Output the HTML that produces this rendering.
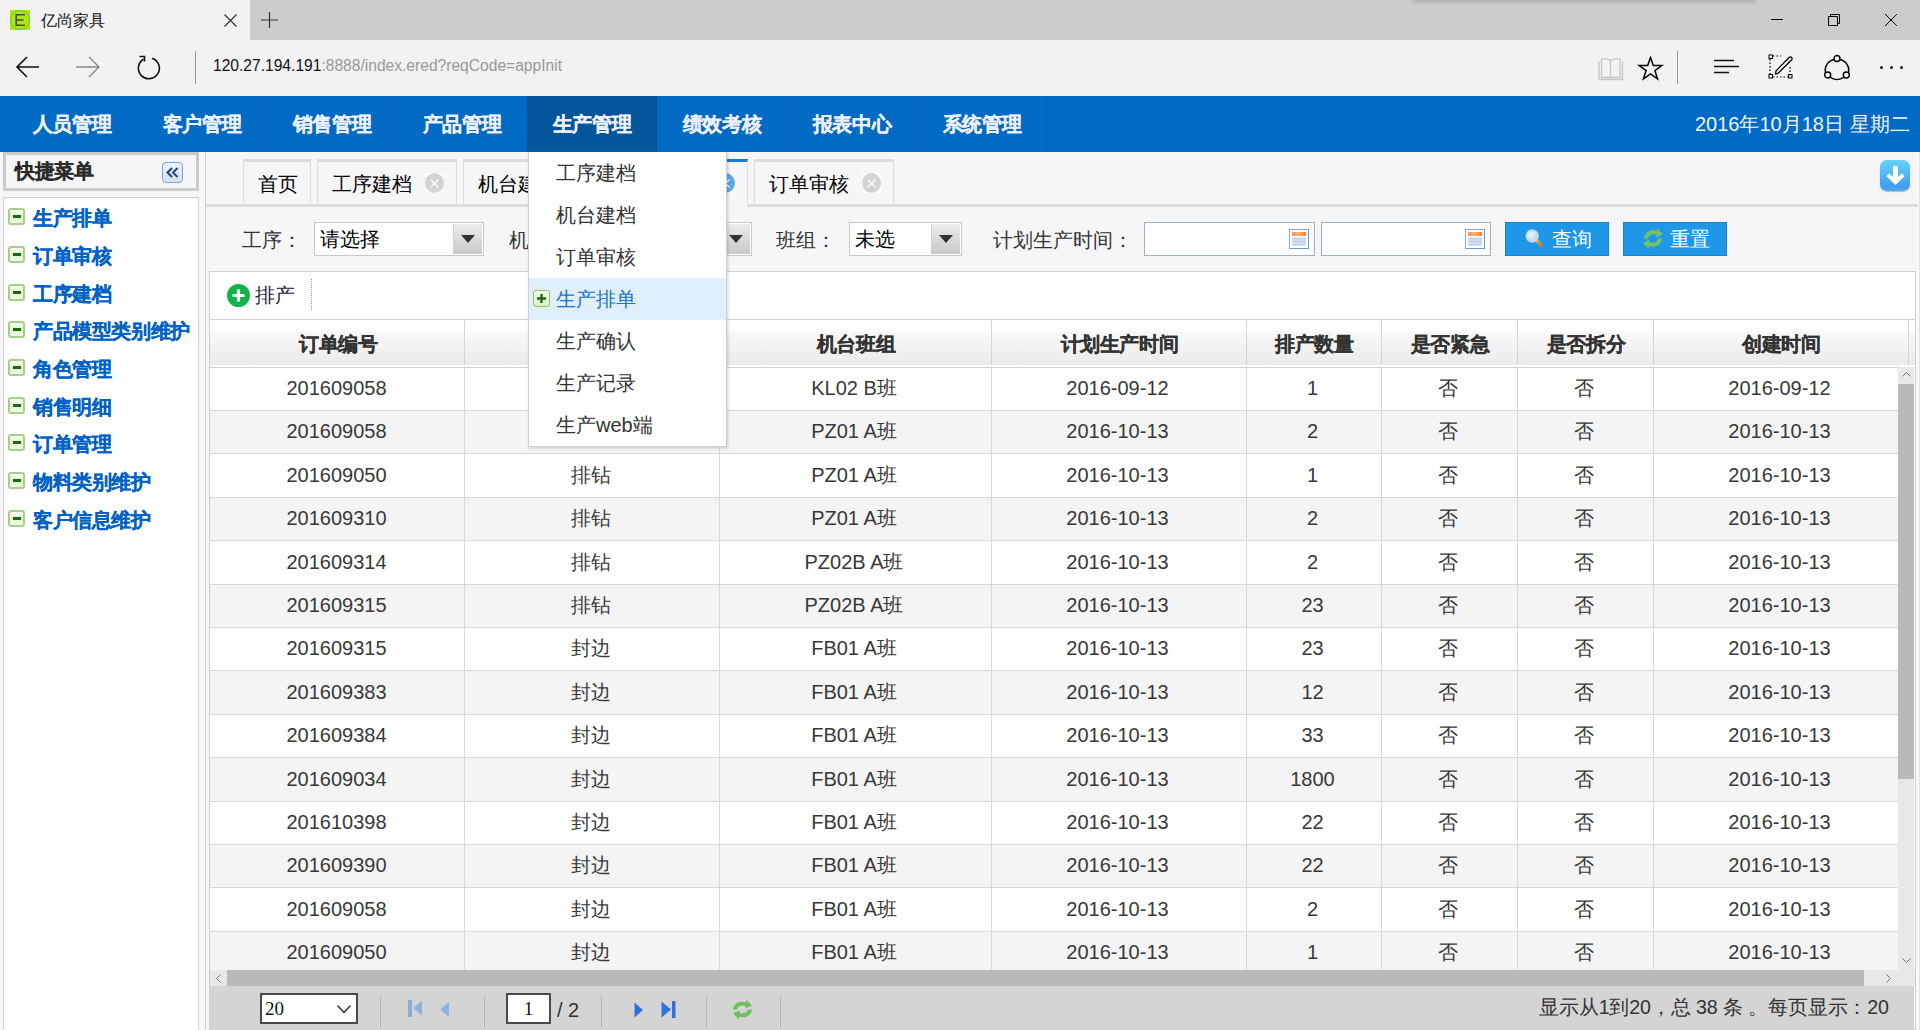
<!DOCTYPE html><html><head><meta charset="utf-8"><style>
*{box-sizing:border-box}
html,body{margin:0;padding:0}
body{width:1920px;height:1030px;overflow:hidden;position:relative;font-family:"Liberation Sans",sans-serif;background:#f6f6f9;color:#333}
.ab{position:absolute}
.t{position:absolute;white-space:nowrap;line-height:1}
.b{font-weight:bold;-webkit-text-stroke:0.2px currentColor;letter-spacing:-0.4px}
svg{position:absolute;overflow:visible}
</style></head><body>

<div class="ab" style="left:0;top:0;width:1920px;height:40px;background:#cccccc"></div>
<div class="ab" style="left:1413px;top:-6px;width:343px;height:8px;background:#a9a9a9;filter:blur(2px);border-radius:3px"></div>
<div class="ab" style="left:0;top:0;width:250px;height:40px;background:#f2f2f2"></div>
<div class="ab" style="left:10px;top:10px;width:20px;height:20px;background:#ade614"></div>
<div class="ab" style="left:10px;top:10px;width:20px;height:20px;border:1px solid #5fcf3a;border-radius:50%"></div>
<svg style="left:15px;top:14px" width="11" height="12"><path d="M10 0.8H1.2V11.2H10M1.2 6H8.5" fill="none" stroke="#4a4a44" stroke-width="1.5"/></svg>
<div class="t" style="left:41px;top:13px;font-size:16px;color:#111">亿尚家具</div>
<svg style="left:224px;top:14px" width="13" height="13"><path d="M0.5 0.5L12.5 12.5M12.5 0.5L0.5 12.5" stroke="#333" stroke-width="1.2"/></svg>
<svg style="left:261px;top:12px" width="17" height="16"><path d="M0 8H17M8.5 0V16" stroke="#333" stroke-width="1.2"/></svg>
<svg style="left:1771px;top:19px" width="12" height="1"><path d="M0 0.5H12" stroke="#000" stroke-width="1"/></svg>
<svg style="left:1828px;top:14px" width="12" height="12"><path d="M0.5 2.5H9.5V11.5H0.5Z M2.5 2.5V0.5H11.5V9.5H9.5" fill="none" stroke="#000" stroke-width="1"/></svg>
<svg style="left:1885px;top:14px" width="12" height="12"><path d="M0 0L12 12M12 0L0 12" stroke="#000" stroke-width="1"/></svg>
<div class="ab" style="left:0;top:40px;width:1920px;height:56px;background:#f2f2f2"></div>
<svg style="left:16px;top:56px" width="24" height="22"><path d="M23 11H1.5M11 1L1 11L11 21" fill="none" stroke="#111" stroke-width="1.6"/></svg>
<svg style="left:76px;top:56px" width="24" height="22"><path d="M0 11H22.5M13 1L23 11L13 21" fill="none" stroke="#888" stroke-width="1.4"/></svg>
<svg style="left:135.5px;top:55px" width="24" height="24"><path d="M7.5 4.2A10.5 10.5 0 1 0 16 3.2" fill="none" stroke="#111" stroke-width="1.6"/><path d="M3.5 1.5H8.5V6.5" fill="none" stroke="#111" stroke-width="1.6"/></svg>
<div class="ab" style="left:195px;top:51px;width:1px;height:33px;background:#999"></div>
<div class="t" style="left:213px;top:58px;font-size:15.6px;color:#111">120.27.194.191<span style="color:#999">:8888/index.ered?reqCode=appInit</span></div>
<svg style="left:1598px;top:58px" width="26" height="23"><path d="M1 3.5V21.5H12.5M24.5 3.5V21.5H12.5M3.5 1V19.5H12.5V2.5Q8 0 3.5 1ZM22 1V19.5H12.5V2.5Q17 0 22 1Z" fill="none" stroke="#c4c4c4" stroke-width="1.3"/></svg>
<svg style="left:1638px;top:56px" width="25" height="25"><path d="M12.5 1.5L15.3 9.6H23.8L16.9 14.6L19.5 22.8L12.5 17.8L5.5 22.8L8.1 14.6L1.2 9.6H9.7Z" fill="none" stroke="#000" stroke-width="1.5"/></svg>
<div class="ab" style="left:1677px;top:51px;width:1px;height:33px;background:#999"></div>
<svg style="left:1714px;top:59px" width="26" height="15"><path d="M0 1.5H20M0 7.5H25M0 13.5H15" stroke="#111" stroke-width="1.4"/></svg>
<svg style="left:1769px;top:55px" width="25" height="24"><path d="M1 4V21M21 12V21M4 1H12M4 22H19" fill="none" stroke="#000" stroke-width="1.2" stroke-dasharray="1.5 2"/><rect x="0" y="0" width="3.5" height="3.5" fill="none" stroke="#000" stroke-width="1"/><rect x="0" y="19.5" width="3.5" height="3.5" fill="none" stroke="#000" stroke-width="1"/><rect x="19.5" y="19.5" width="3.5" height="3.5" fill="none" stroke="#000" stroke-width="1"/><path d="M7 16L20 2.5Q22 1 23 3Q23.5 4.5 22 5.5L9 18.5L6.5 19Z" fill="none" stroke="#000" stroke-width="1.3"/></svg>
<svg style="left:1824px;top:55px" width="26" height="25"><circle cx="13" cy="3.5" r="3" fill="#f2f2f2" stroke="#000" stroke-width="1.4"/><circle cx="3.7" cy="20" r="3" fill="#f2f2f2" stroke="#000" stroke-width="1.4"/><circle cx="22.3" cy="20" r="3" fill="#f2f2f2" stroke="#000" stroke-width="1.4"/><path d="M10.3 4.5A11 11 0 0 0 1.4 17.5M15.7 4.5A11 11 0 0 1 24.6 17.5M6.3 22.3A11 11 0 0 0 19.7 22.3" fill="none" stroke="#000" stroke-width="1.4"/></svg>
<div class="ab" style="left:1880px;top:66px;width:3px;height:3px;border-radius:50%;background:#111"></div>
<div class="ab" style="left:1890px;top:66px;width:3px;height:3px;border-radius:50%;background:#111"></div>
<div class="ab" style="left:1900px;top:66px;width:3px;height:3px;border-radius:50%;background:#111"></div>
<div class="ab" style="left:0;top:96px;width:1920px;height:56px;background:#006ac4"></div>
<div class="t b" style="left:7px;top:114px;width:130px;text-align:center;font-size:20px;color:#eef1fb">人员管理</div>
<div class="ab" style="left:136px;top:96px;width:1px;height:56px;background:#0460b4"></div>
<div class="t b" style="left:137px;top:114px;width:130px;text-align:center;font-size:20px;color:#eef1fb">客户管理</div>
<div class="ab" style="left:266px;top:96px;width:1px;height:56px;background:#0460b4"></div>
<div class="t b" style="left:267px;top:114px;width:130px;text-align:center;font-size:20px;color:#eef1fb">销售管理</div>
<div class="ab" style="left:396px;top:96px;width:1px;height:56px;background:#0460b4"></div>
<div class="t b" style="left:397px;top:114px;width:130px;text-align:center;font-size:20px;color:#eef1fb">产品管理</div>
<div class="ab" style="left:526px;top:96px;width:1px;height:56px;background:#0460b4"></div>
<div class="t b" style="left:527px;top:114px;width:130px;text-align:center;font-size:20px;color:#eef1fb">生产管理</div>
<div class="ab" style="left:656px;top:96px;width:1px;height:56px;background:#0460b4"></div>
<div class="t b" style="left:657px;top:114px;width:130px;text-align:center;font-size:20px;color:#eef1fb">绩效考核</div>
<div class="ab" style="left:786px;top:96px;width:1px;height:56px;background:#0460b4"></div>
<div class="t b" style="left:787px;top:114px;width:130px;text-align:center;font-size:20px;color:#eef1fb">报表中心</div>
<div class="ab" style="left:916px;top:96px;width:1px;height:56px;background:#0460b4"></div>
<div class="t b" style="left:917px;top:114px;width:130px;text-align:center;font-size:20px;color:#eef1fb">系统管理</div>
<div class="ab" style="left:1046px;top:96px;width:1px;height:56px;background:#0460b4"></div>
<div class="ab" style="left:527px;top:96px;width:130px;height:56px;background:linear-gradient(#02559a 0,#02559a 50px,#0a5ca0 56px)"></div>
<div class="ab" style="left:656px;top:96px;width:1px;height:56px;background:#024f90"></div>
<div class="t b" style="left:527px;top:114px;width:130px;text-align:center;font-size:20px;color:#eef1fb">生产管理</div>
<div class="t" style="left:1695px;top:114px;font-size:20px;color:#f4f6fc">2016年10月18日 星期二</div>
<div class="ab" style="left:0;top:152px;width:205px;height:878px;background:#f7f7f9"></div>
<div class="ab" style="left:3px;top:152px;width:196px;height:39px;border:3px solid #cbcbcb;background:#f6f6f9"></div>
<div class="t b" style="left:15px;top:161px;font-size:20px;color:#2a2a2a">快捷菜单</div>
<div class="ab" style="left:162px;top:162px;width:21px;height:21px;border:1px solid #7aa6e6;border-radius:4px;background:linear-gradient(#eef5fd,#cfe2f8)"></div>
<svg style="left:166px;top:167px" width="13" height="11"><path d="M6 1L1.5 5.5L6 10M11.5 1L7 5.5L11.5 10" fill="none" stroke="#253f86" stroke-width="2"/></svg>
<div class="ab" style="left:3px;top:197px;width:196px;height:833px;border:1px solid #d0d0d0;border-bottom:none;background:#fff"></div>
<div class="ab" style="left:8px;top:208px;width:17px;height:17px;border:2px solid #a6d08a;border-radius:3px;background:linear-gradient(#fbfef5,#e3f2d2 50%,#f0fae6)"></div>
<div class="ab" style="left:13px;top:215px;width:8px;height:3px;background:#1f6a08"></div>
<div class="t b" style="left:33px;top:208px;font-size:20px;color:#0062c4">生产排单</div>
<div class="ab" style="left:8px;top:246px;width:17px;height:17px;border:2px solid #a6d08a;border-radius:3px;background:linear-gradient(#fbfef5,#e3f2d2 50%,#f0fae6)"></div>
<div class="ab" style="left:13px;top:253px;width:8px;height:3px;background:#1f6a08"></div>
<div class="t b" style="left:33px;top:246px;font-size:20px;color:#0062c4">订单审核</div>
<div class="ab" style="left:8px;top:284px;width:17px;height:17px;border:2px solid #a6d08a;border-radius:3px;background:linear-gradient(#fbfef5,#e3f2d2 50%,#f0fae6)"></div>
<div class="ab" style="left:13px;top:291px;width:8px;height:3px;background:#1f6a08"></div>
<div class="t b" style="left:33px;top:284px;font-size:20px;color:#0062c4">工序建档</div>
<div class="ab" style="left:8px;top:321px;width:17px;height:17px;border:2px solid #a6d08a;border-radius:3px;background:linear-gradient(#fbfef5,#e3f2d2 50%,#f0fae6)"></div>
<div class="ab" style="left:13px;top:328px;width:8px;height:3px;background:#1f6a08"></div>
<div class="t b" style="left:33px;top:321px;font-size:20px;color:#0062c4">产品模型类别维护</div>
<div class="ab" style="left:8px;top:359px;width:17px;height:17px;border:2px solid #a6d08a;border-radius:3px;background:linear-gradient(#fbfef5,#e3f2d2 50%,#f0fae6)"></div>
<div class="ab" style="left:13px;top:366px;width:8px;height:3px;background:#1f6a08"></div>
<div class="t b" style="left:33px;top:359px;font-size:20px;color:#0062c4">角色管理</div>
<div class="ab" style="left:8px;top:397px;width:17px;height:17px;border:2px solid #a6d08a;border-radius:3px;background:linear-gradient(#fbfef5,#e3f2d2 50%,#f0fae6)"></div>
<div class="ab" style="left:13px;top:404px;width:8px;height:3px;background:#1f6a08"></div>
<div class="t b" style="left:33px;top:397px;font-size:20px;color:#0062c4">销售明细</div>
<div class="ab" style="left:8px;top:434px;width:17px;height:17px;border:2px solid #a6d08a;border-radius:3px;background:linear-gradient(#fbfef5,#e3f2d2 50%,#f0fae6)"></div>
<div class="ab" style="left:13px;top:441px;width:8px;height:3px;background:#1f6a08"></div>
<div class="t b" style="left:33px;top:434px;font-size:20px;color:#0062c4">订单管理</div>
<div class="ab" style="left:8px;top:472px;width:17px;height:17px;border:2px solid #a6d08a;border-radius:3px;background:linear-gradient(#fbfef5,#e3f2d2 50%,#f0fae6)"></div>
<div class="ab" style="left:13px;top:479px;width:8px;height:3px;background:#1f6a08"></div>
<div class="t b" style="left:33px;top:472px;font-size:20px;color:#0062c4">物料类别维护</div>
<div class="ab" style="left:8px;top:510px;width:17px;height:17px;border:2px solid #a6d08a;border-radius:3px;background:linear-gradient(#fbfef5,#e3f2d2 50%,#f0fae6)"></div>
<div class="ab" style="left:13px;top:517px;width:8px;height:3px;background:#1f6a08"></div>
<div class="t b" style="left:33px;top:510px;font-size:20px;color:#0062c4">客户信息维护</div>
<div class="ab" style="left:205px;top:152px;width:1px;height:878px;background:#cfcfcf"></div>
<div class="ab" style="left:1916px;top:152px;width:4px;height:878px;background:#f9f9fb"></div>
<div class="ab" style="left:1919px;top:152px;width:1px;height:878px;background:#e4e4e4"></div>
<div class="ab" style="left:206px;top:204px;width:1712px;height:3px;background:#dcdcdc"></div>
<div class="ab" style="left:243px;top:159px;width:68px;height:45px;border:1px solid #dedede;border-top:3px solid #dcdcdc;border-bottom:none;background:#f6f6f9"></div>
<div class="t" style="left:258px;top:174px;font-size:20px;color:#000">首页</div>
<div class="ab" style="left:317px;top:159px;width:140px;height:45px;border:1px solid #dedede;border-top:3px solid #dcdcdc;border-bottom:none;background:#f6f6f9"></div>
<div class="t" style="left:332px;top:174px;font-size:20px;color:#000">工序建档</div>
<div class="ab" style="left:425px;top:173px;width:19px;height:20px;background:#fff"></div>
<div class="ab" style="left:425px;top:173px;width:19px;height:20px;border-radius:50%;background:#d3d3d3"></div>
<svg style="left:430px;top:179px" width="9" height="9"><path d="M0.5 0.5L8.5 8.5M8.5 0.5L0.5 8.5" stroke="#fff" stroke-width="1.2"/></svg>
<div class="ab" style="left:463px;top:159px;width:140px;height:45px;border:1px solid #dedede;border-top:3px solid #dcdcdc;border-bottom:none;background:#f6f6f9"></div>
<div class="t" style="left:478px;top:174px;font-size:20px;color:#000">机台建档</div>
<div class="ab" style="left:571px;top:173px;width:19px;height:20px;background:#fff"></div>
<div class="ab" style="left:571px;top:173px;width:19px;height:20px;border-radius:50%;background:#d3d3d3"></div>
<svg style="left:576px;top:179px" width="9" height="9"><path d="M0.5 0.5L8.5 8.5M8.5 0.5L0.5 8.5" stroke="#fff" stroke-width="1.2"/></svg>
<div class="ab" style="left:609px;top:159px;width:139px;height:48px;border:1px solid #dedede;border-top:3px solid #1a7ad4;border-bottom:none;background:#f6f6f9"></div>
<div class="t" style="left:624px;top:174px;font-size:20px;color:#000">生产排单</div>
<div class="ab" style="left:716px;top:173px;width:19px;height:20px;background:#fff"></div>
<div class="ab" style="left:716px;top:173px;width:19px;height:20px;border-radius:50%;background:#5aa8ea"></div>
<svg style="left:721px;top:179px" width="9" height="9"><path d="M0.5 0.5L8.5 8.5M8.5 0.5L0.5 8.5" stroke="#fff" stroke-width="1.2"/></svg>
<div class="ab" style="left:754px;top:159px;width:140px;height:45px;border:1px solid #dedede;border-top:3px solid #dcdcdc;border-bottom:none;background:#f6f6f9"></div>
<div class="t" style="left:769px;top:174px;font-size:20px;color:#000">订单审核</div>
<div class="ab" style="left:862px;top:173px;width:19px;height:20px;background:#fff"></div>
<div class="ab" style="left:862px;top:173px;width:19px;height:20px;border-radius:50%;background:#d3d3d3"></div>
<svg style="left:867px;top:179px" width="9" height="9"><path d="M0.5 0.5L8.5 8.5M8.5 0.5L0.5 8.5" stroke="#fff" stroke-width="1.2"/></svg>
<div class="ab" style="left:1880px;top:160px;width:30px;height:31px;border-radius:7px;background:linear-gradient(#62d4fd,#52b8f8 45%,#3f9dee 85%,#4aaef8);box-shadow:0 1px 1px rgba(90,60,40,.35)"></div>
<svg style="left:1886px;top:165px" width="19" height="21"><path d="M7 1.5Q9.5 0 12 1.5V12L15.8 8.2L18.6 11.2L9.5 20L0.4 11.2L3.2 8.2L7 12Z" fill="#fff"/></svg>
<div class="t" style="left:242px;top:230px;font-size:20px;color:#333">工序：</div>
<div class="ab" style="left:314px;top:222px;width:170px;height:34px;border:1px solid #c9c9c9;background:#fff"></div>
<div class="t" style="left:320px;top:229px;font-size:20px;color:#000">请选择</div>
<div class="ab" style="left:453px;top:224px;width:29px;height:30px;border-left:1px solid #d0d0d0;background:linear-gradient(#ececec,#c9c9c9)"></div>
<svg style="left:461px;top:235px" width="14" height="8"><path d="M0 0H14L7 8Z" fill="#333"/></svg>
<div class="t" style="left:509px;top:230px;font-size:20px;color:#333">机台：</div>
<div class="ab" style="left:582px;top:222px;width:170px;height:34px;border:1px solid #c9c9c9;background:#fff"></div>
<div class="t" style="left:588px;top:229px;font-size:20px;color:#000">请选择</div>
<div class="ab" style="left:721px;top:224px;width:29px;height:30px;border-left:1px solid #d0d0d0;background:linear-gradient(#ececec,#c9c9c9)"></div>
<svg style="left:729px;top:235px" width="14" height="8"><path d="M0 0H14L7 8Z" fill="#333"/></svg>
<div class="t" style="left:776px;top:230px;font-size:20px;color:#333">班组：</div>
<div class="ab" style="left:849px;top:222px;width:113px;height:34px;border:1px solid #c9c9c9;background:#fff"></div>
<div class="t" style="left:855px;top:229px;font-size:20px;color:#000">未选</div>
<div class="ab" style="left:931px;top:224px;width:29px;height:30px;border-left:1px solid #d0d0d0;background:linear-gradient(#ececec,#c9c9c9)"></div>
<svg style="left:939px;top:235px" width="14" height="8"><path d="M0 0H14L7 8Z" fill="#333"/></svg>
<div class="t" style="left:993px;top:230px;font-size:20px;color:#333">计划生产时间：</div>
<div class="ab" style="left:1144px;top:222px;width:171px;height:34px;border:1px solid #9fb2bc;background:#fff"></div>
<div class="ab" style="left:1289px;top:229px;width:20px;height:20px;border:1px solid #86abe0;border-right-color:#6f97d2;border-bottom-color:#6f97d2;background:#fff"></div>
<div class="ab" style="left:1292px;top:232px;width:14px;height:4px;background:linear-gradient(90deg,#ff9a55,#ffae70 50%,#ff7b30)"></div>
<svg style="left:1292px;top:236px" width="14" height="11"><rect x="0" y="2" width="14" height="8" fill="#dbe6f5"/><path d="M0 2.5H14M0 5.5H14M0 8.5H11M3 1V10M6 1V10M9 1V8M12 1V9" stroke="#b2c8e6" stroke-width="0.9"/></svg>
<div class="ab" style="left:1321px;top:222px;width:170px;height:34px;border:1px solid #9fb2bc;background:#fff"></div>
<div class="ab" style="left:1465px;top:229px;width:20px;height:20px;border:1px solid #86abe0;border-right-color:#6f97d2;border-bottom-color:#6f97d2;background:#fff"></div>
<div class="ab" style="left:1468px;top:232px;width:14px;height:4px;background:linear-gradient(90deg,#ff9a55,#ffae70 50%,#ff7b30)"></div>
<svg style="left:1468px;top:236px" width="14" height="11"><rect x="0" y="2" width="14" height="8" fill="#dbe6f5"/><path d="M0 2.5H14M0 5.5H14M0 8.5H11M3 1V10M6 1V10M9 1V8M12 1V9" stroke="#b2c8e6" stroke-width="0.9"/></svg>
<div class="ab" style="left:1505px;top:222px;width:104px;height:34px;background:#1f97e9;border:1px solid #1583d3"></div>
<svg style="left:1525px;top:229px" width="19" height="19"><defs><radialGradient id="mg" cx="0.4" cy="0.4" r="0.6"><stop offset="0" stop-color="#eef5fd"/><stop offset="1" stop-color="#b9d3f0"/></radialGradient><linearGradient id="hg" x1="0" y1="0" x2="1" y2="1"><stop offset="0" stop-color="#e0b070"/><stop offset="1" stop-color="#b87a30"/></linearGradient></defs><path d="M11.5 11.5L16.5 16.5" stroke="url(#hg)" stroke-width="3.4" stroke-linecap="round"/><circle cx="7.2" cy="7" r="6.3" fill="url(#mg)" stroke="#c4d8ee" stroke-width="0.8"/></svg>
<div class="t" style="left:1552px;top:228.5px;font-size:20px;color:#fff">查询</div>
<div class="ab" style="left:1623px;top:222px;width:104px;height:34px;background:#1f97e9;border:1px solid #1583d3"></div>
<svg style="left:1641px;top:227px" width="24" height="23"><path d="M3 11.5A9 8.5 0 0 1 16 4.2L16 1L22 7L15.5 10.5L15.5 8A5.5 5 0 0 0 7 11.5Z" fill="#74c262"/><path d="M21 11.5A9 8.5 0 0 1 8 18.8L8 22L2 16L8.5 12.5L8.5 15A5.5 5 0 0 0 17 11.5Z" fill="#74c262"/></svg>
<div class="t" style="left:1670px;top:228.5px;font-size:20px;color:#fff">重置</div>
<div class="ab" style="left:209px;top:271px;width:1707px;height:759px;border:1px solid #cfcfcf;background:#fff"></div>
<svg style="left:227px;top:284px" width="23" height="23"><circle cx="11.5" cy="11.5" r="11.5" fill="#12b34a"/><path d="M11.5 5.5V17.5M5.5 11.5H17.5" stroke="#fff" stroke-width="3.2"/></svg>
<div class="t" style="left:255px;top:285px;font-size:20px;color:#223">排产</div>
<div class="ab" style="left:311px;top:279px;width:1px;height:31px;border-left:1px dotted #999"></div>
<div class="ab" style="left:210px;top:319px;width:1705px;height:1px;background:#d0d0d0"></div>
<div class="ab" style="left:210px;top:320px;width:1705px;height:46px;background:linear-gradient(#ffffff 0px,#ffffff 11px,#f8f8f8 12px,#ebebeb 45px,#ffffff 45px)"></div>
<div class="ab" style="left:210px;top:367px;width:1688px;height:1px;background:#d0d0d0"></div>
<div class="t b" style="left:212px;top:334px;width:253px;text-align:center;font-size:20px;color:#333">订单编号</div>
<div class="t b" style="left:465px;top:334px;width:255px;text-align:center;font-size:20px;color:#333">工序</div>
<div class="t b" style="left:720px;top:334px;width:272px;text-align:center;font-size:20px;color:#333">机台班组</div>
<div class="t b" style="left:992px;top:334px;width:255px;text-align:center;font-size:20px;color:#333">计划生产时间</div>
<div class="t b" style="left:1247px;top:334px;width:135px;text-align:center;font-size:20px;color:#333">排产数量</div>
<div class="t b" style="left:1382px;top:334px;width:136px;text-align:center;font-size:20px;color:#333">是否紧急</div>
<div class="t b" style="left:1518px;top:334px;width:136px;text-align:center;font-size:20px;color:#333">是否拆分</div>
<div class="t b" style="left:1654px;top:334px;width:255px;text-align:center;font-size:20px;color:#333">创建时间</div>
<div class="ab" style="left:464px;top:320px;width:1px;height:45px;background:#d4d4d4"></div>
<div class="ab" style="left:719px;top:320px;width:1px;height:45px;background:#d4d4d4"></div>
<div class="ab" style="left:991px;top:320px;width:1px;height:45px;background:#d4d4d4"></div>
<div class="ab" style="left:1246px;top:320px;width:1px;height:45px;background:#d4d4d4"></div>
<div class="ab" style="left:1381px;top:320px;width:1px;height:45px;background:#d4d4d4"></div>
<div class="ab" style="left:1517px;top:320px;width:1px;height:45px;background:#d4d4d4"></div>
<div class="ab" style="left:1653px;top:320px;width:1px;height:45px;background:#d4d4d4"></div>
<div class="ab" style="left:1908px;top:320px;width:1px;height:45px;background:#d4d4d4"></div>
<div class="ab" style="left:210px;top:368px;width:1688px;height:602px;overflow:hidden">
<div class="ab" style="left:0;top:0px;width:1688px;height:42px;background:#fff"></div>
<div class="ab" style="left:0;top:42px;width:1688px;height:1px;background:#d8d8d8"></div>
<div class="t" style="left:0px;top:10.0px;width:253px;text-align:center;font-size:20px;color:#383838">201609058</div>
<div class="t" style="left:253px;top:10.0px;width:255px;text-align:center;font-size:20px;color:#383838">排钻</div>
<div class="t" style="left:508px;top:10.0px;width:272px;text-align:center;font-size:20px;color:#383838">KL02 B班</div>
<div class="t" style="left:780px;top:10.0px;width:255px;text-align:center;font-size:20px;color:#383838">2016-09-12</div>
<div class="t" style="left:1035px;top:10.0px;width:135px;text-align:center;font-size:20px;color:#383838">1</div>
<div class="t" style="left:1170px;top:10.0px;width:136px;text-align:center;font-size:20px;color:#383838">否</div>
<div class="t" style="left:1306px;top:10.0px;width:136px;text-align:center;font-size:20px;color:#383838">否</div>
<div class="t" style="left:1442px;top:10.0px;width:255px;text-align:center;font-size:20px;color:#383838">2016-09-12</div>
<div class="ab" style="left:0;top:43px;width:1688px;height:42px;background:#f4f4f4"></div>
<div class="ab" style="left:0;top:85px;width:1688px;height:1px;background:#d8d8d8"></div>
<div class="t" style="left:0px;top:53.0px;width:253px;text-align:center;font-size:20px;color:#383838">201609058</div>
<div class="t" style="left:253px;top:53.0px;width:255px;text-align:center;font-size:20px;color:#383838">排钻</div>
<div class="t" style="left:508px;top:53.0px;width:272px;text-align:center;font-size:20px;color:#383838">PZ01 A班</div>
<div class="t" style="left:780px;top:53.0px;width:255px;text-align:center;font-size:20px;color:#383838">2016-10-13</div>
<div class="t" style="left:1035px;top:53.0px;width:135px;text-align:center;font-size:20px;color:#383838">2</div>
<div class="t" style="left:1170px;top:53.0px;width:136px;text-align:center;font-size:20px;color:#383838">否</div>
<div class="t" style="left:1306px;top:53.0px;width:136px;text-align:center;font-size:20px;color:#383838">否</div>
<div class="t" style="left:1442px;top:53.0px;width:255px;text-align:center;font-size:20px;color:#383838">2016-10-13</div>
<div class="ab" style="left:0;top:86px;width:1688px;height:43px;background:#fff"></div>
<div class="ab" style="left:0;top:129px;width:1688px;height:1px;background:#d8d8d8"></div>
<div class="t" style="left:0px;top:96.5px;width:253px;text-align:center;font-size:20px;color:#383838">201609050</div>
<div class="t" style="left:253px;top:96.5px;width:255px;text-align:center;font-size:20px;color:#383838">排钻</div>
<div class="t" style="left:508px;top:96.5px;width:272px;text-align:center;font-size:20px;color:#383838">PZ01 A班</div>
<div class="t" style="left:780px;top:96.5px;width:255px;text-align:center;font-size:20px;color:#383838">2016-10-13</div>
<div class="t" style="left:1035px;top:96.5px;width:135px;text-align:center;font-size:20px;color:#383838">1</div>
<div class="t" style="left:1170px;top:96.5px;width:136px;text-align:center;font-size:20px;color:#383838">否</div>
<div class="t" style="left:1306px;top:96.5px;width:136px;text-align:center;font-size:20px;color:#383838">否</div>
<div class="t" style="left:1442px;top:96.5px;width:255px;text-align:center;font-size:20px;color:#383838">2016-10-13</div>
<div class="ab" style="left:0;top:130px;width:1688px;height:42px;background:#f4f4f4"></div>
<div class="ab" style="left:0;top:172px;width:1688px;height:1px;background:#d8d8d8"></div>
<div class="t" style="left:0px;top:140.0px;width:253px;text-align:center;font-size:20px;color:#383838">201609310</div>
<div class="t" style="left:253px;top:140.0px;width:255px;text-align:center;font-size:20px;color:#383838">排钻</div>
<div class="t" style="left:508px;top:140.0px;width:272px;text-align:center;font-size:20px;color:#383838">PZ01 A班</div>
<div class="t" style="left:780px;top:140.0px;width:255px;text-align:center;font-size:20px;color:#383838">2016-10-13</div>
<div class="t" style="left:1035px;top:140.0px;width:135px;text-align:center;font-size:20px;color:#383838">2</div>
<div class="t" style="left:1170px;top:140.0px;width:136px;text-align:center;font-size:20px;color:#383838">否</div>
<div class="t" style="left:1306px;top:140.0px;width:136px;text-align:center;font-size:20px;color:#383838">否</div>
<div class="t" style="left:1442px;top:140.0px;width:255px;text-align:center;font-size:20px;color:#383838">2016-10-13</div>
<div class="ab" style="left:0;top:173px;width:1688px;height:43px;background:#fff"></div>
<div class="ab" style="left:0;top:216px;width:1688px;height:1px;background:#d8d8d8"></div>
<div class="t" style="left:0px;top:183.5px;width:253px;text-align:center;font-size:20px;color:#383838">201609314</div>
<div class="t" style="left:253px;top:183.5px;width:255px;text-align:center;font-size:20px;color:#383838">排钻</div>
<div class="t" style="left:508px;top:183.5px;width:272px;text-align:center;font-size:20px;color:#383838">PZ02B A班</div>
<div class="t" style="left:780px;top:183.5px;width:255px;text-align:center;font-size:20px;color:#383838">2016-10-13</div>
<div class="t" style="left:1035px;top:183.5px;width:135px;text-align:center;font-size:20px;color:#383838">2</div>
<div class="t" style="left:1170px;top:183.5px;width:136px;text-align:center;font-size:20px;color:#383838">否</div>
<div class="t" style="left:1306px;top:183.5px;width:136px;text-align:center;font-size:20px;color:#383838">否</div>
<div class="t" style="left:1442px;top:183.5px;width:255px;text-align:center;font-size:20px;color:#383838">2016-10-13</div>
<div class="ab" style="left:0;top:217px;width:1688px;height:42px;background:#f4f4f4"></div>
<div class="ab" style="left:0;top:259px;width:1688px;height:1px;background:#d8d8d8"></div>
<div class="t" style="left:0px;top:227.0px;width:253px;text-align:center;font-size:20px;color:#383838">201609315</div>
<div class="t" style="left:253px;top:227.0px;width:255px;text-align:center;font-size:20px;color:#383838">排钻</div>
<div class="t" style="left:508px;top:227.0px;width:272px;text-align:center;font-size:20px;color:#383838">PZ02B A班</div>
<div class="t" style="left:780px;top:227.0px;width:255px;text-align:center;font-size:20px;color:#383838">2016-10-13</div>
<div class="t" style="left:1035px;top:227.0px;width:135px;text-align:center;font-size:20px;color:#383838">23</div>
<div class="t" style="left:1170px;top:227.0px;width:136px;text-align:center;font-size:20px;color:#383838">否</div>
<div class="t" style="left:1306px;top:227.0px;width:136px;text-align:center;font-size:20px;color:#383838">否</div>
<div class="t" style="left:1442px;top:227.0px;width:255px;text-align:center;font-size:20px;color:#383838">2016-10-13</div>
<div class="ab" style="left:0;top:260px;width:1688px;height:42px;background:#fff"></div>
<div class="ab" style="left:0;top:302px;width:1688px;height:1px;background:#d8d8d8"></div>
<div class="t" style="left:0px;top:270.0px;width:253px;text-align:center;font-size:20px;color:#383838">201609315</div>
<div class="t" style="left:253px;top:270.0px;width:255px;text-align:center;font-size:20px;color:#383838">封边</div>
<div class="t" style="left:508px;top:270.0px;width:272px;text-align:center;font-size:20px;color:#383838">FB01 A班</div>
<div class="t" style="left:780px;top:270.0px;width:255px;text-align:center;font-size:20px;color:#383838">2016-10-13</div>
<div class="t" style="left:1035px;top:270.0px;width:135px;text-align:center;font-size:20px;color:#383838">23</div>
<div class="t" style="left:1170px;top:270.0px;width:136px;text-align:center;font-size:20px;color:#383838">否</div>
<div class="t" style="left:1306px;top:270.0px;width:136px;text-align:center;font-size:20px;color:#383838">否</div>
<div class="t" style="left:1442px;top:270.0px;width:255px;text-align:center;font-size:20px;color:#383838">2016-10-13</div>
<div class="ab" style="left:0;top:303px;width:1688px;height:43px;background:#f4f4f4"></div>
<div class="ab" style="left:0;top:346px;width:1688px;height:1px;background:#d8d8d8"></div>
<div class="t" style="left:0px;top:313.5px;width:253px;text-align:center;font-size:20px;color:#383838">201609383</div>
<div class="t" style="left:253px;top:313.5px;width:255px;text-align:center;font-size:20px;color:#383838">封边</div>
<div class="t" style="left:508px;top:313.5px;width:272px;text-align:center;font-size:20px;color:#383838">FB01 A班</div>
<div class="t" style="left:780px;top:313.5px;width:255px;text-align:center;font-size:20px;color:#383838">2016-10-13</div>
<div class="t" style="left:1035px;top:313.5px;width:135px;text-align:center;font-size:20px;color:#383838">12</div>
<div class="t" style="left:1170px;top:313.5px;width:136px;text-align:center;font-size:20px;color:#383838">否</div>
<div class="t" style="left:1306px;top:313.5px;width:136px;text-align:center;font-size:20px;color:#383838">否</div>
<div class="t" style="left:1442px;top:313.5px;width:255px;text-align:center;font-size:20px;color:#383838">2016-10-13</div>
<div class="ab" style="left:0;top:347px;width:1688px;height:42px;background:#fff"></div>
<div class="ab" style="left:0;top:389px;width:1688px;height:1px;background:#d8d8d8"></div>
<div class="t" style="left:0px;top:357.0px;width:253px;text-align:center;font-size:20px;color:#383838">201609384</div>
<div class="t" style="left:253px;top:357.0px;width:255px;text-align:center;font-size:20px;color:#383838">封边</div>
<div class="t" style="left:508px;top:357.0px;width:272px;text-align:center;font-size:20px;color:#383838">FB01 A班</div>
<div class="t" style="left:780px;top:357.0px;width:255px;text-align:center;font-size:20px;color:#383838">2016-10-13</div>
<div class="t" style="left:1035px;top:357.0px;width:135px;text-align:center;font-size:20px;color:#383838">33</div>
<div class="t" style="left:1170px;top:357.0px;width:136px;text-align:center;font-size:20px;color:#383838">否</div>
<div class="t" style="left:1306px;top:357.0px;width:136px;text-align:center;font-size:20px;color:#383838">否</div>
<div class="t" style="left:1442px;top:357.0px;width:255px;text-align:center;font-size:20px;color:#383838">2016-10-13</div>
<div class="ab" style="left:0;top:390px;width:1688px;height:43px;background:#f4f4f4"></div>
<div class="ab" style="left:0;top:433px;width:1688px;height:1px;background:#d8d8d8"></div>
<div class="t" style="left:0px;top:400.5px;width:253px;text-align:center;font-size:20px;color:#383838">201609034</div>
<div class="t" style="left:253px;top:400.5px;width:255px;text-align:center;font-size:20px;color:#383838">封边</div>
<div class="t" style="left:508px;top:400.5px;width:272px;text-align:center;font-size:20px;color:#383838">FB01 A班</div>
<div class="t" style="left:780px;top:400.5px;width:255px;text-align:center;font-size:20px;color:#383838">2016-10-13</div>
<div class="t" style="left:1035px;top:400.5px;width:135px;text-align:center;font-size:20px;color:#383838">1800</div>
<div class="t" style="left:1170px;top:400.5px;width:136px;text-align:center;font-size:20px;color:#383838">否</div>
<div class="t" style="left:1306px;top:400.5px;width:136px;text-align:center;font-size:20px;color:#383838">否</div>
<div class="t" style="left:1442px;top:400.5px;width:255px;text-align:center;font-size:20px;color:#383838">2016-10-13</div>
<div class="ab" style="left:0;top:434px;width:1688px;height:42px;background:#fff"></div>
<div class="ab" style="left:0;top:476px;width:1688px;height:1px;background:#d8d8d8"></div>
<div class="t" style="left:0px;top:444.0px;width:253px;text-align:center;font-size:20px;color:#383838">201610398</div>
<div class="t" style="left:253px;top:444.0px;width:255px;text-align:center;font-size:20px;color:#383838">封边</div>
<div class="t" style="left:508px;top:444.0px;width:272px;text-align:center;font-size:20px;color:#383838">FB01 A班</div>
<div class="t" style="left:780px;top:444.0px;width:255px;text-align:center;font-size:20px;color:#383838">2016-10-13</div>
<div class="t" style="left:1035px;top:444.0px;width:135px;text-align:center;font-size:20px;color:#383838">22</div>
<div class="t" style="left:1170px;top:444.0px;width:136px;text-align:center;font-size:20px;color:#383838">否</div>
<div class="t" style="left:1306px;top:444.0px;width:136px;text-align:center;font-size:20px;color:#383838">否</div>
<div class="t" style="left:1442px;top:444.0px;width:255px;text-align:center;font-size:20px;color:#383838">2016-10-13</div>
<div class="ab" style="left:0;top:477px;width:1688px;height:42px;background:#f4f4f4"></div>
<div class="ab" style="left:0;top:519px;width:1688px;height:1px;background:#d8d8d8"></div>
<div class="t" style="left:0px;top:487.0px;width:253px;text-align:center;font-size:20px;color:#383838">201609390</div>
<div class="t" style="left:253px;top:487.0px;width:255px;text-align:center;font-size:20px;color:#383838">封边</div>
<div class="t" style="left:508px;top:487.0px;width:272px;text-align:center;font-size:20px;color:#383838">FB01 A班</div>
<div class="t" style="left:780px;top:487.0px;width:255px;text-align:center;font-size:20px;color:#383838">2016-10-13</div>
<div class="t" style="left:1035px;top:487.0px;width:135px;text-align:center;font-size:20px;color:#383838">22</div>
<div class="t" style="left:1170px;top:487.0px;width:136px;text-align:center;font-size:20px;color:#383838">否</div>
<div class="t" style="left:1306px;top:487.0px;width:136px;text-align:center;font-size:20px;color:#383838">否</div>
<div class="t" style="left:1442px;top:487.0px;width:255px;text-align:center;font-size:20px;color:#383838">2016-10-13</div>
<div class="ab" style="left:0;top:520px;width:1688px;height:43px;background:#fff"></div>
<div class="ab" style="left:0;top:563px;width:1688px;height:1px;background:#d8d8d8"></div>
<div class="t" style="left:0px;top:530.5px;width:253px;text-align:center;font-size:20px;color:#383838">201609058</div>
<div class="t" style="left:253px;top:530.5px;width:255px;text-align:center;font-size:20px;color:#383838">封边</div>
<div class="t" style="left:508px;top:530.5px;width:272px;text-align:center;font-size:20px;color:#383838">FB01 A班</div>
<div class="t" style="left:780px;top:530.5px;width:255px;text-align:center;font-size:20px;color:#383838">2016-10-13</div>
<div class="t" style="left:1035px;top:530.5px;width:135px;text-align:center;font-size:20px;color:#383838">2</div>
<div class="t" style="left:1170px;top:530.5px;width:136px;text-align:center;font-size:20px;color:#383838">否</div>
<div class="t" style="left:1306px;top:530.5px;width:136px;text-align:center;font-size:20px;color:#383838">否</div>
<div class="t" style="left:1442px;top:530.5px;width:255px;text-align:center;font-size:20px;color:#383838">2016-10-13</div>
<div class="ab" style="left:0;top:564px;width:1688px;height:42px;background:#f4f4f4"></div>
<div class="ab" style="left:0;top:606px;width:1688px;height:1px;background:#d8d8d8"></div>
<div class="t" style="left:0px;top:574.0px;width:253px;text-align:center;font-size:20px;color:#383838">201609050</div>
<div class="t" style="left:253px;top:574.0px;width:255px;text-align:center;font-size:20px;color:#383838">封边</div>
<div class="t" style="left:508px;top:574.0px;width:272px;text-align:center;font-size:20px;color:#383838">FB01 A班</div>
<div class="t" style="left:780px;top:574.0px;width:255px;text-align:center;font-size:20px;color:#383838">2016-10-13</div>
<div class="t" style="left:1035px;top:574.0px;width:135px;text-align:center;font-size:20px;color:#383838">1</div>
<div class="t" style="left:1170px;top:574.0px;width:136px;text-align:center;font-size:20px;color:#383838">否</div>
<div class="t" style="left:1306px;top:574.0px;width:136px;text-align:center;font-size:20px;color:#383838">否</div>
<div class="t" style="left:1442px;top:574.0px;width:255px;text-align:center;font-size:20px;color:#383838">2016-10-13</div>
<div class="ab" style="left:254px;top:0;width:1px;height:602px;background:#d8d8d8"></div>
<div class="ab" style="left:509px;top:0;width:1px;height:602px;background:#d8d8d8"></div>
<div class="ab" style="left:781px;top:0;width:1px;height:602px;background:#d8d8d8"></div>
<div class="ab" style="left:1036px;top:0;width:1px;height:602px;background:#d8d8d8"></div>
<div class="ab" style="left:1171px;top:0;width:1px;height:602px;background:#d8d8d8"></div>
<div class="ab" style="left:1307px;top:0;width:1px;height:602px;background:#d8d8d8"></div>
<div class="ab" style="left:1443px;top:0;width:1px;height:602px;background:#d8d8d8"></div>
</div>
<div class="ab" style="left:1898px;top:367px;width:16px;height:603px;background:#e8e8e8"></div>
<div class="ab" style="left:1898px;top:384px;width:16px;height:395px;background:#b9b9b9"></div>
<svg style="left:1902px;top:372px" width="9" height="5"><path d="M0.5 4.5L4.5 0.5L8.5 4.5" fill="none" stroke="#777" stroke-width="1"/></svg>
<svg style="left:1902px;top:958px" width="9" height="5"><path d="M0.5 0.5L4.5 4.5L8.5 0.5" fill="none" stroke="#777" stroke-width="1"/></svg>
<div class="ab" style="left:210px;top:970px;width:1705px;height:16px;background:#e8e8e8"></div>
<div class="ab" style="left:227px;top:970px;width:1637px;height:16px;background:#b9b9b9"></div>
<svg style="left:216px;top:974px" width="5" height="9"><path d="M4.5 0.5L0.5 4.5L4.5 8.5" fill="none" stroke="#777" stroke-width="1"/></svg>
<svg style="left:1886px;top:974px" width="5" height="9"><path d="M0.5 0.5L4.5 4.5L0.5 8.5" fill="none" stroke="#777" stroke-width="1"/></svg>
<div class="ab" style="left:210px;top:986px;width:1704px;height:44px;background:#d4d4d4"></div>
<div class="ab" style="left:260px;top:993px;width:98px;height:31px;border:2px solid #4a4a4a;background:#fff"></div>
<div class="t" style="left:265px;top:999px;font-family:'Liberation Serif',serif;font-size:19px;color:#111">20</div>
<svg style="left:337px;top:1005px" width="14" height="9"><path d="M0.5 0.5L7 7.5L13.5 0.5" fill="none" stroke="#222" stroke-width="1.3"/></svg>
<div class="ab" style="left:380px;top:996px;width:1px;height:31px;border-left:1px dotted #999"></div>
<div class="ab" style="left:484px;top:996px;width:1px;height:31px;border-left:1px dotted #999"></div>
<div class="ab" style="left:601px;top:996px;width:1px;height:31px;border-left:1px dotted #999"></div>
<div class="ab" style="left:706px;top:996px;width:1px;height:31px;border-left:1px dotted #999"></div>
<div class="ab" style="left:780px;top:996px;width:1px;height:31px;border-left:1px dotted #999"></div>
<svg style="left:408px;top:1000px" width="16" height="18"><rect x="0" y="0" width="4" height="17" fill="#8eaadd"/><path d="M14 0.5V16L5.5 8Z" fill="#94b0e0"/></svg>
<svg style="left:440px;top:1001px" width="10" height="17"><path d="M9 0.5V16.5L0.5 8.5Z" fill="#94b0e0"/></svg>
<div class="ab" style="left:506px;top:993px;width:45px;height:31px;border:2px solid #4a4a4a;background:#fff"></div>
<div class="t" style="left:506px;top:999px;width:45px;text-align:center;font-family:'Liberation Serif',serif;font-size:19px;color:#111">1</div>
<div class="t" style="left:557px;top:1000px;font-size:20px;color:#333">/ 2</div>
<svg style="left:634px;top:1002px" width="10" height="16"><path d="M0.5 0.5L9 8L0.5 15.5Z" fill="#2f74dc"/></svg>
<svg style="left:661px;top:1001px" width="15" height="17"><path d="M0.5 0.5L10 8.5L0.5 16.5Z" fill="#2f74dc"/><rect x="11" y="0" width="3.5" height="17" fill="#2f74dc"/></svg>
<svg style="left:731px;top:999px" width="23" height="21"><path d="M2 10.5A9 8 0 0 1 15 3.5L15 0.5L21 6.5L14.5 9.5L14.5 7.5A5.5 4.8 0 0 0 6 10.5Z" fill="#6dbf5c"/><path d="M21 10.5A9 8 0 0 1 8 17.5L8 20.5L2 14.5L8.5 11.5L8.5 13.5A5.5 4.8 0 0 0 17 10.5Z" fill="#6dbf5c"/></svg>
<div class="t" style="left:1539px;top:997.5px;font-size:19.6px;letter-spacing:-0.12px;color:#333">显示从1到20，总 38 条 。每页显示：20</div>
<div class="ab" style="left:528px;top:152px;width:199px;height:295px;background:#fff;border:1px solid #cfcfcf;border-top:none;box-shadow:1px 1px 3px rgba(0,0,0,.18)"></div>
<div class="t" style="left:556px;top:163px;font-size:20px;color:#333">工序建档</div>
<div class="t" style="left:556px;top:205px;font-size:20px;color:#333">机台建档</div>
<div class="t" style="left:556px;top:247px;font-size:20px;color:#333">订单审核</div>
<div class="ab" style="left:529px;top:278px;width:197px;height:42px;background:#dfeffc"></div>
<div class="ab" style="left:533px;top:290px;width:17px;height:17px;border:1px solid #8fc46a;border-radius:3px;background:linear-gradient(#f6fbee,#dcefc8)"></div>
<svg style="left:537px;top:294px" width="9" height="9"><path d="M4.5 0V9M0 4.5H9" stroke="#1f6a08" stroke-width="2.4"/></svg>
<div class="t" style="left:556px;top:289px;font-size:20px;color:#1a73c8">生产排单</div>
<div class="t" style="left:556px;top:331px;font-size:20px;color:#333">生产确认</div>
<div class="t" style="left:556px;top:373px;font-size:20px;color:#333">生产记录</div>
<div class="t" style="left:556px;top:415px;font-size:20px;color:#333">生产web端</div>
</body></html>
